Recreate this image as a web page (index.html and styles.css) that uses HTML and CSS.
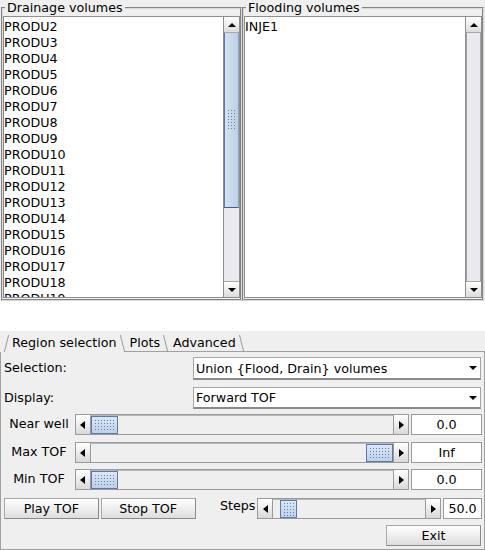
FILE: index.html
```html
<!DOCTYPE html>
<html>
<head>
<meta charset="utf-8">
<link rel="stylesheet" href="styles.css">
</head>
<body>
<div class="top">
  <fieldset class="group group-left">
    <legend>Drainage volumes</legend>
    <div class="listbox">
      <div class="items">
        <div class="item">PRODU2</div>
        <div class="item">PRODU3</div>
        <div class="item">PRODU4</div>
        <div class="item">PRODU5</div>
        <div class="item">PRODU6</div>
        <div class="item">PRODU7</div>
        <div class="item">PRODU8</div>
        <div class="item">PRODU9</div>
        <div class="item">PRODU10</div>
        <div class="item">PRODU11</div>
        <div class="item">PRODU12</div>
        <div class="item">PRODU13</div>
        <div class="item">PRODU14</div>
        <div class="item">PRODU15</div>
        <div class="item">PRODU16</div>
        <div class="item">PRODU17</div>
        <div class="item">PRODU18</div>
        <div class="item">PRODU19</div>
      </div>
      <div class="vscroll">
        <div class="sbtn"><i class="tri-up"></i></div>
        <div class="vtrack">
          <div class="vthumb"><span class="grip vgrip"></span></div>
        </div>
        <div class="sbtn"><i class="tri-down"></i></div>
      </div>
    </div>
  </fieldset>
  <fieldset class="group group-right">
    <legend>Flooding volumes</legend>
    <div class="listbox">
      <div class="items">
        <div class="item">INJE1</div>
      </div>
      <div class="vscroll">
        <div class="sbtn"><i class="tri-up"></i></div>
        <div class="vtrack empty"></div>
        <div class="sbtn"><i class="tri-down"></i></div>
      </div>
    </div>
  </fieldset>
</div>
<div class="gap"></div>
<div class="tabbar">
  <div class="tab active">Region selection</div>
  <div class="tab">Plots</div>
  <div class="tab">Advanced</div>
  <div class="tabfill"></div>
</div>
<div class="panel">
  <div class="row row-sel">
    <div class="flabel">Selection:</div>
    <div class="choice"><span class="ctext">Union {Flood, Drain} volumes</span><i class="tri-down"></i></div>
  </div>
  <div class="row row-disp">
    <div class="flabel">Display:</div>
    <div class="choice"><span class="ctext">Forward TOF</span><i class="tri-down"></i></div>
  </div>
  <div class="row row-s1">
    <div class="slabel">Near well</div>
    <div class="slider big">
      <div class="sarrow"><i class="tri-left"></i></div>
      <div class="htrack"><div class="hthumb"><span class="grip"></span></div></div>
      <div class="sarrow"><i class="tri-right"></i></div>
    </div>
    <div class="value">0.0</div>
  </div>
  <div class="row row-s2">
    <div class="slabel">Max TOF</div>
    <div class="slider big">
      <div class="sarrow"><i class="tri-left"></i></div>
      <div class="htrack end"><div class="hthumb"><span class="grip"></span></div></div>
      <div class="sarrow"><i class="tri-right"></i></div>
    </div>
    <div class="value">Inf</div>
  </div>
  <div class="row row-s3">
    <div class="slabel">Min TOF</div>
    <div class="slider big">
      <div class="sarrow"><i class="tri-left"></i></div>
      <div class="htrack"><div class="hthumb"><span class="grip"></span></div></div>
      <div class="sarrow"><i class="tri-right"></i></div>
    </div>
    <div class="value">0.0</div>
  </div>
  <div class="row row-play">
    <div class="btn btn-play">Play TOF</div>
    <div class="btn btn-stop">Stop TOF</div>
    <div class="steps-label">Steps</div>
    <div class="slider small">
      <div class="sarrow"><i class="tri-left"></i></div>
      <div class="htrack"><div class="hthumb narrow" style="margin-left:7px"><span class="grip"></span></div></div>
      <div class="sarrow"><i class="tri-right"></i></div>
    </div>
    <div class="value small-val">50.0</div>
  </div>
  <div class="row row-exit">
    <div class="btn btn-exit">Exit</div>
  </div>
</div>
</body>
</html>
```
FILE: styles.css
```css
* { box-sizing: border-box; }
html, body { margin: 0; padding: 0; }
body {
  width: 485px;
  height: 550px;
  overflow: hidden;
  background: #ffffff;
  font-family: "DejaVu Sans", "Noto Sans", sans-serif;
  font-size: 12.7px;
  color: #000;
}

/* ---------- top lists ---------- */
.top {
  display: flex;
  height: 301px;
  background: #efefef;
  padding-left: 1px;
}
.group {
  margin: 0;
  padding: 1px 0 0 0;
  border: 2px groove #d8d8d8;
  min-width: 0;
}
.group-left { width: 241px; }
.group-right { width: 242px; }
legend {
  padding: 0 2px;
  margin-left: 2px;
  height: 15px;
  line-height: 15px;
}
.listbox {
  display: flex;
  height: 282px;
  border: 1px solid #8f8f8f;
  background: #fff;
}
.items {
  flex: 1;
  overflow: hidden;
  padding-top: 2px;
}
.item {
  height: 16px;
  line-height: 16px;
  white-space: nowrap;
}
.vscroll {
  width: 16px;
  display: flex;
  flex-direction: column;
  border-left: 1px solid #8f8f8f;
}
.sbtn {
  height: 16px;
  flex: none;
  background: linear-gradient(#ffffff, #dcdcdc);
  border-bottom: 1px solid #a8a8a8;
  display: flex;
  align-items: center;
  justify-content: center;
}
.sbtn + .vtrack + .sbtn {
  border-top: 1px solid #a8a8a8;
  border-bottom: 0;
}
.vtrack {
  flex: 1;
  background: #e9e9ef;
  display: flex;
  flex-direction: column;
}
.vtrack.empty {
  border-left: 1px solid #a0a0a0;
  border-right: 1px solid #a0a0a0;
}
.vthumb {
  height: 175px;
  background: linear-gradient(90deg, #d6e2f0, #bcd0e6);
  border-left: 1px solid #5a78a8;
  border-bottom: 1px solid #3f5f94;
  border-right: 1px solid #8ea6c8;
  display: flex;
  align-items: center;
  justify-content: center;
}
.grip {
  display: block;
  width: 10px;
  height: 13px;
  background-image: radial-gradient(circle, #5b7fb6 0.7px, transparent 1px);
  background-size: 3px 3px;
}
.vgrip { width: 10px; height: 22px; }

/* triangles */
.tri-up, .tri-down, .tri-left, .tri-right {
  display: block;
  width: 0;
  height: 0;
}
.tri-up {
  border-left: 4px solid transparent;
  border-right: 4px solid transparent;
  border-bottom: 4px solid #000;
}
.tri-down {
  border-left: 4px solid transparent;
  border-right: 4px solid transparent;
  border-top: 4px solid #000;
}
.tri-left {
  border-top: 4px solid transparent;
  border-bottom: 4px solid transparent;
  border-right: 5px solid #000;
}
.tri-right {
  border-top: 4px solid transparent;
  border-bottom: 4px solid transparent;
  border-left: 5px solid #000;
}

/* ---------- tabs ---------- */
.gap { height: 30px; background: #fff; }
.tabbar {
  height: 21px;
  background: #efefef;
  display: flex;
  align-items: flex-end;
  padding-left: 4px;
}
.tab {
  position: relative;
  height: 18px;
  line-height: 18px;
  padding: 0 8px 0 5px;
  border-bottom: 1px solid #a0a0a0;
  white-space: nowrap;
}
.tab::after {
  content: "";
  position: absolute;
  right: 2px;
  top: 1px;
  bottom: 0;
  border-right: 1px solid #9a9a9a;
  transform: skewX(14deg);
}
.tab.active {
  border-bottom: 0;
  padding-left: 8px;
}
.tab.active::before {
  content: "";
  position: absolute;
  left: 2px;
  top: 1px;
  bottom: 0;
  border-left: 1px solid #9a9a9a;
  transform: skewX(-14deg);
}
.tabfill {
  flex: 1;
  height: 1px;
  background: #a0a0a0;
}

/* ---------- panel ---------- */
.panel {
  height: 198px;
  background: #efefef;
  border: 1px solid #a0a0a0;
  border-top: 0;
  padding: 5px 2px 0 2px;
}
.row {
  display: flex;
  align-items: center;
}
.row-sel { height: 23px; }
.row-disp { height: 22px; margin-top: 7px; }
.row-s1 { height: 21px; margin-top: 5px; }
.row-s2 { height: 21px; margin-top: 7px; }
.row-s3 { height: 21px; margin-top: 6px; }
.row-play { height: 21px; margin-top: 8px; }
.row-exit { height: 21px; margin-top: 6px; justify-content: flex-end; }

.flabel {
  width: 190px;
  padding-left: 1px;
  margin-top: -2px;
}
.choice {
  width: 288px;
  height: 100%;
  background: #fff;
  border: 1px solid #a6a6a6;
  border-bottom: 2px solid #8a8a8a;
  display: flex;
  align-items: center;
  padding: 0 3px 0 2px;
}
.ctext { flex: 1; white-space: nowrap; }

.slabel {
  width: 72px;
  text-align: center;
  margin-top: -3px;
}
.slider {
  height: 100%;
  display: flex;
  border: 1px solid #9a9a9a;
  background: #efefef;
}
.slider.big { width: 335px; }
.sarrow {
  width: 15px;
  flex: none;
  background: linear-gradient(#ffffff, #d9d9d9);
  border-right: 1px solid #9a9a9a;
  display: flex;
  align-items: center;
  justify-content: center;
}
.sarrow:last-child {
  border-right: 0;
  border-left: 1px solid #9a9a9a;
}
.htrack {
  flex: 1;
  display: flex;
  border-top: 1px solid #b8b8b8;
}
.htrack.end { justify-content: flex-end; }
.hthumb {
  width: 27px;
  height: 100%;
  background: linear-gradient(#dce7f4, #bed1e7);
  border: 1px solid #5a7aae;
  display: flex;
  align-items: center;
  justify-content: center;
}
.hthumb .grip { width: 21px; height: 13px; }
.hthumb.narrow { width: 17px; }
.hthumb.narrow .grip { width: 11px; height: 15px; }

.value {
  width: 71px;
  height: 100%;
  margin-left: 2px;
  background: #fff;
  border: 1px solid #9a9a9a;
  display: flex;
  align-items: center;
  justify-content: center;
}
.value.small-val { width: 39px; }

.btn {
  height: 100%;
  width: 95px;
  background: linear-gradient(#ffffff, #dedede);
  border: 1px solid #a8a8a8;
  border-bottom-color: #8a8a8a;
  border-right-color: #8a8a8a;
  display: flex;
  align-items: center;
  justify-content: center;
}
.btn-play { margin-left: 1px; }
.btn-stop { margin-left: 2px; }
.steps-label {
  width: 62px;
  text-align: right;
  padding-right: 2px;
  align-self: flex-start;
}
.slider.small { width: 184px; }
.btn-exit { width: 95px; margin-right: 1px; }
```
